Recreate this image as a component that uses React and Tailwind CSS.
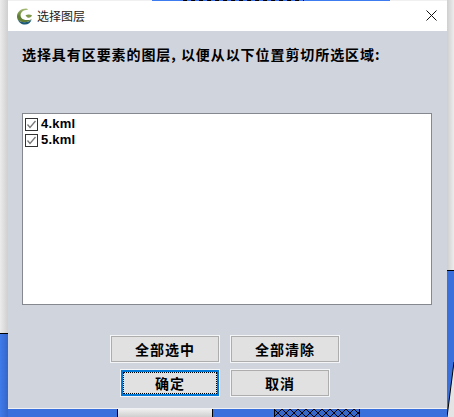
const FONT = { fontFamily: '"Noto Sans CJK SC", "Liberation Sans", sans-serif' };

function Logo() {
  return (
    <svg width="17" height="17" viewBox="0 0 17 17">
      <defs>
        <linearGradient id="logo-g" x1="0" y1="0" x2="0" y2="1">
          <stop offset="0" stopColor="#a9bf78" />
          <stop offset="0.55" stopColor="#5f7d33" />
          <stop offset="1" stopColor="#5f7d33" />
        </linearGradient>
      </defs>
      <path d="M10 0.5C5 0.5 1 3.8 1 8.5c0 1 .2 1.9.6 2.7 1 1.9 3.6 3 6.6 3 3 0 5.8-1 7.3-3-1.6.7-3.4 1-5.2.8C7 11.6 4.6 10 4.6 7.4 4.6 4.4 7 2.4 10 2l2.2-.6C11.6.8 10.8.5 10 .5z" fill="url(#logo-g)" />
      <path d="M9.5 7.2c1.7-.9 4.4-1.1 6.5.1-.3 1.6-2 2.6-3.7 2.4-1.3-.2-2.2-1.4-2.8-2.5z" fill="#7f9a4c" />
      <path d="M1.6 11.2c1 2.9 3.8 5.3 7.4 5.3 3.2 0 5.8-1.9 6.7-5.3-1.5 2-4.3 3-7.3 3s-5.8-1-6.8-3z" fill="#1c5a78" />
    </svg>
  );
}

function CheckRow({ label }) {
  return (
    <div className="flex h-[16px] items-center">
      <span className="flex h-[13px] w-[13px] items-center justify-center border border-[#333333] bg-white">
        <svg width="11" height="11" viewBox="0 0 11 11">
          <path d="M1.5 5.5L4 8.5L9.5 2" fill="none" stroke="#777777" strokeWidth="1.3" />
        </svg>
      </span>
      <span className="mb-[2px] ml-[3px] text-[13px] font-bold leading-none tracking-[0.2px] text-black" style={{ fontFamily: '"Liberation Sans", sans-serif' }}>{label}</span>
    </div>
  );
}

function DlgButton({ label, width, primary }) {
  if (primary) {
    return (
      <button className="flex h-[28px] items-center justify-center border border-[#f4f5f7] bg-[#0078d7] p-[2px]" style={{ width, ...FONT }}>
        <span className="flex h-full w-full items-center justify-center border border-dotted border-black bg-[#e1e1e1] text-[14px] font-bold tracking-[1px] text-black">{label}</span>
      </button>
    );
  }
  return (
    <button className="h-[28px] border border-[#f4f5f7] p-0" style={{ width, ...FONT }}>
      <span className="flex h-full w-full items-center justify-center border border-[#adadad] bg-[#e1e1e1] text-[14px] font-bold tracking-[1px] text-black">{label}</span>
    </button>
  );
}

export default function App() {
  return (
    <div className="flex h-[417px] w-[454px] overflow-hidden bg-[#3a70dc]">
      {/* left strip behind the dialog */}
      <div className="flex w-[8px] flex-col">
        <div className="h-[333px] bg-gradient-to-r from-[#ececec] to-[#cfcfcf]" />
        <div className="flex-1 border-t border-black bg-gradient-to-r from-[#3f7bea] to-[#3566c8]" />
      </div>

      <div className="flex w-[439px] flex-col">
        {/* map edge above the dialog */}
        <div className="flex h-[1px]">
          <div className="w-[144px] bg-[#f0f0f0]" />
          <div className="w-[31px] bg-[#3d7bf0]" />
          <div className="w-[121px] bg-[repeating-linear-gradient(90deg,#000_0,#000_4px,#3d7bf0_4px,#3d7bf0_8px)]" />
          <div className="w-[86px] bg-[#3d7bf0]" />
          <div className="flex-1 bg-[#f0f0f0]" />
        </div>

        {/* dialog */}
        <div className="flex h-[408px] flex-col border-b border-[#f0f1f4] bg-[#d0d4dd]">
          <div className="flex h-[30px] items-center bg-white pl-[8px]">
            <Logo />
            <span className="ml-[4px] text-[12px] text-[#222222]" style={FONT}>选择图层</span>
            <svg className="ml-auto mr-[10px] mt-[-2px]" width="11" height="11" viewBox="0 0 11 11">
              <path d="M0.5 0.5L10.5 10.5M10.5 0.5L0.5 10.5" stroke="#111111" strokeWidth="1" fill="none" />
            </svg>
          </div>

          <div className="flex flex-1 flex-col px-[14px]">
            <p className="mt-[13px] h-[20px] whitespace-nowrap text-[14px] font-bold leading-[20px] tracking-[0.93px] text-black" style={FONT}>
              选择具有区要素的图层, 以便从以下位置剪切所选区域:
            </p>
            <div className="mt-[49px] h-[192px] w-[410px] border border-[#85888f] bg-white pl-[2px] pt-[2px]">
              <CheckRow label="4.kml" />
              <CheckRow label="5.kml" />
            </div>

            <div className="mt-[30px] flex flex-col gap-[6px]">
              <div className="flex gap-[10px] pl-[88px]">
                <DlgButton label="全部选中" width={110} />
                <DlgButton label="全部清除" width={110} />
              </div>
              <div className="flex gap-[10px] pl-[98px]">
                <DlgButton label="确定" width={100} primary />
                <DlgButton label="取消" width={100} />
              </div>
            </div>
          </div>
        </div>

        {/* map below the dialog */}
        <div className="flex flex-1">
          <div className="w-[109px]" />
          <div className="w-[96px] border-x border-black bg-gradient-to-b from-[#f0f0f0] to-[#cfcfcf]" />
          <div className="w-[61px]" />
          <svg width="86" height="8" viewBox="0 0 86 8" className="block">
            <defs>
              <pattern id="hatch" width="8" height="8" patternUnits="userSpaceOnUse">
                <path d="M0 0L8 8M8 0L0 8" stroke="#000000" strokeWidth="1" />
              </pattern>
            </defs>
            <rect width="86" height="8" fill="#3566c8" />
            <rect width="86" height="8" fill="url(#hatch)" />
            <path d="M0.5 0V8M85.5 0V8" stroke="#000000" strokeWidth="1" />
          </svg>
        </div>
      </div>

      {/* right strip behind the dialog */}
      <div className="flex flex-1 flex-col">
        <div className="h-[270px] bg-gradient-to-r from-[#cfcfcf] to-[#ececec]" />
        <svg width="7" height="147" viewBox="0 0 7 147" className="block">
          <rect width="7" height="147" fill="#3a70dc" />
          <path d="M7 92L0 147H7Z" fill="#e4e4e4" />
          <path d="M7 92L0 147" stroke="#000000" strokeWidth="1" fill="none" />
          <path d="M0 0.5H7" stroke="#000000" strokeWidth="1" />
        </svg>
      </div>
    </div>
  );
}
